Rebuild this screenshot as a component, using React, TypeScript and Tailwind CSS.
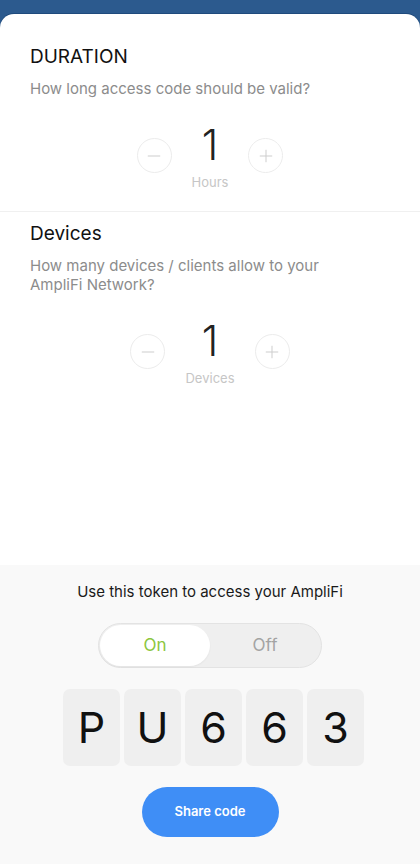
import { Minus, Plus } from 'lucide-react'

function Stepper({ value, label }: { value: number; label: string }) {
  return (
    <div className="flex justify-center items-start gap-[20px] mt-[26px]">
      <button className="mt-[14px] flex items-center justify-center w-[35px] h-[35px] rounded-full border border-[#ececec] text-[#cdcdcd]">
        <Minus size={20} strokeWidth={1.2} />
      </button>
      <div className="flex flex-col items-center">
        <div className="text-[42px] leading-[42px] font-light text-[#222]">{value}</div>
        <div className="mt-[8px] text-[13px] leading-[16px] text-[#c6c6c6]">{label}</div>
      </div>
      <button className="mt-[14px] flex items-center justify-center w-[35px] h-[35px] rounded-full border border-[#ececec] text-[#cdcdcd]">
        <Plus size={20} strokeWidth={1.2} />
      </button>
    </div>
  )
}

export default function App() {
  const code = ['P', 'U', '6', '6', '3']

  return (
    <div
      className="min-h-[864px] flex flex-col bg-[#2c5a8e] pt-[14px]"
      style={{ fontFamily: 'Inter, "Noto Sans", sans-serif' }}
    >
      <div className="flex-1 flex flex-col bg-white rounded-t-[14px] overflow-hidden shadow-[0_-1px_0_#1f4a7c]">
        <div className="flex-1">
          <section className="px-[30px] pt-[31px] pb-[21px] border-b border-[#f0f0f0]">
            <h2 className="text-[19px] leading-[24px] text-[#111]">DURATION</h2>
            <p className="mt-[10px] text-[15px] leading-[19px] text-[#8c8c8c]">
              How long access code should be valid?
            </p>
            <Stepper value={1} label="Hours" />
          </section>

          <section className="px-[30px] pt-[10px]">
            <h2 className="text-[19px] leading-[24px] text-[#111]">Devices</h2>
            <p className="mt-[10px] w-[300px] text-[15px] leading-[19px] text-[#8c8c8c]">
              How many devices / clients allow to your AmpliFi Network?
            </p>
            <Stepper value={1} label="Devices" />
          </section>
        </div>

        <div className="bg-[#f9f9f9] flex flex-col items-center pt-[17px] pb-[27px]">
          <p className="text-[15px] leading-[20px] text-[#1a1a1a]">
            Use this token to access your AmpliFi
          </p>

          <div className="mt-[21px] flex w-[224px] h-[45px] rounded-full border border-[#e3e3e3] bg-[#efefef] p-px">
            <button className="flex-1 rounded-full bg-white text-[17px] text-[#8cc63e] shadow-[0_1px_2px_rgba(0,0,0,0.05)]">
              On
            </button>
            <button className="flex-1 rounded-full text-[17px] text-[#a3a3a3]">Off</button>
          </div>

          <div className="mt-[21px] ml-[7px] flex gap-[4px]">
            {code.map((c, i) => (
              <div
                key={i}
                className="flex items-center justify-center w-[57px] h-[77px] rounded-[7px] bg-[#efefef] text-[43px] text-[#111]"
              >
                {c}
              </div>
            ))}
          </div>

          <button className="mt-[21px] w-[137px] h-[50px] rounded-full bg-[#3f8ef6] text-white text-[13px] font-semibold">
            Share code
          </button>
        </div>
      </div>
    </div>
  )
}
